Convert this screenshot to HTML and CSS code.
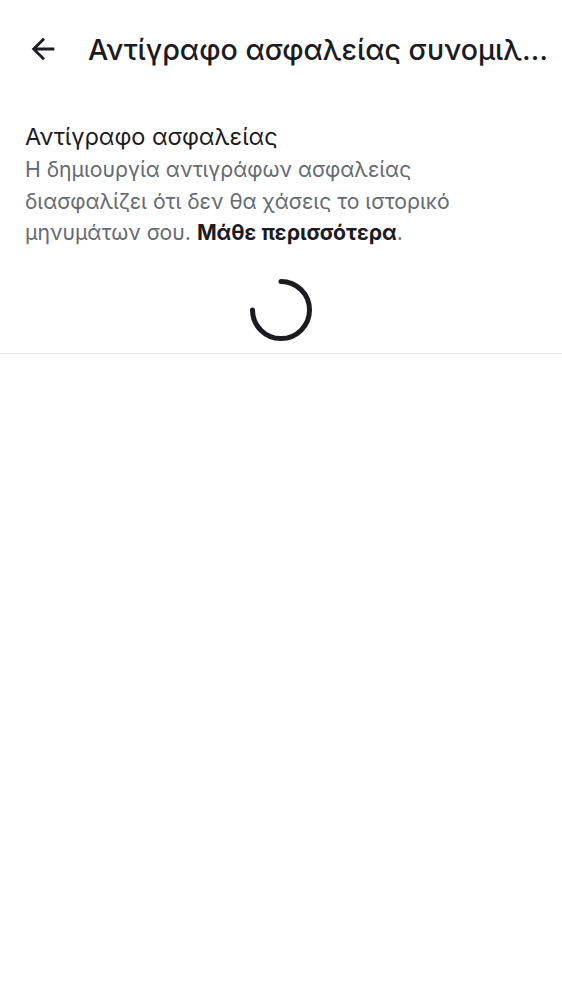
FILE: index.html
```html
<!DOCTYPE html>
<html lang="el">
<head>
<meta charset="utf-8">
<link rel="stylesheet" href="styles.css">
</head>
<body>
<header class="topbar">
  <button class="back" aria-label="Πίσω">
    <svg viewBox="0 0 24 24" width="34" height="34"><path d="M20 11H7.83l5.59-5.59L12 4l-8 8 8 8 1.41-1.41L7.83 13H20v-2z" fill="#1c1b1f"/></svg>
  </button>
  <h1 class="title">Αντίγραφο ασφαλείας συνομιλιών</h1>
</header>
<main>
  <section class="intro">
    <h2 class="intro-title">Αντίγραφο ασφαλείας</h2>
    <p class="intro-text">Η δημιουργία αντιγράφων ασφαλείας διασφαλίζει ότι δεν θα χάσεις το ιστορικό μηνυμάτων σου. <b class="link">Μάθε περισσότερα</b>.</p>
  </section>
  <div class="loader">
    <svg viewBox="0 0 64 64" width="64" height="64"><path d="M32 3.5 A28.5 28.5 0 1 1 3.5 32" fill="none" stroke="#1c1b1f" stroke-width="5" stroke-linecap="round"/></svg>
  </div>
</main>
</body>
</html>
```
FILE: styles.css
```css
html, body { margin: 0; padding: 0; background: #fff; }
body { font-family: Inter, "Noto Sans", sans-serif; color: #1c1b1f; }
.topbar { display: flex; align-items: center; height: 98px; padding-left: 26px; padding-right: 12px; box-sizing: border-box; }
.back { border: 0; background: none; padding: 0; width: 34px; height: 34px; display: flex; align-items: center; justify-content: center; margin-right: 28px; flex: none; }
.back svg { display: block; }
.title { margin: 0; font-size: 28.6px; font-weight: 500; white-space: nowrap; overflow: hidden; text-overflow: ellipsis; min-width: 0; }
.intro { padding: 22px 25px 0; }
.intro-title { margin: 0; font-size: 23.5px; font-weight: 400; line-height: 34px; }
.intro-text { margin: 0; max-width: 450px; font-size: 21.2px; line-height: 31.5px; color: #656b73; }
.link { color: #1c1b1f; font-weight: 700; }
.loader { display: flex; justify-content: center; padding: 29px 0 11px; border-bottom: 1px solid #e6e6e6; }
.loader svg { display: block; }
```
